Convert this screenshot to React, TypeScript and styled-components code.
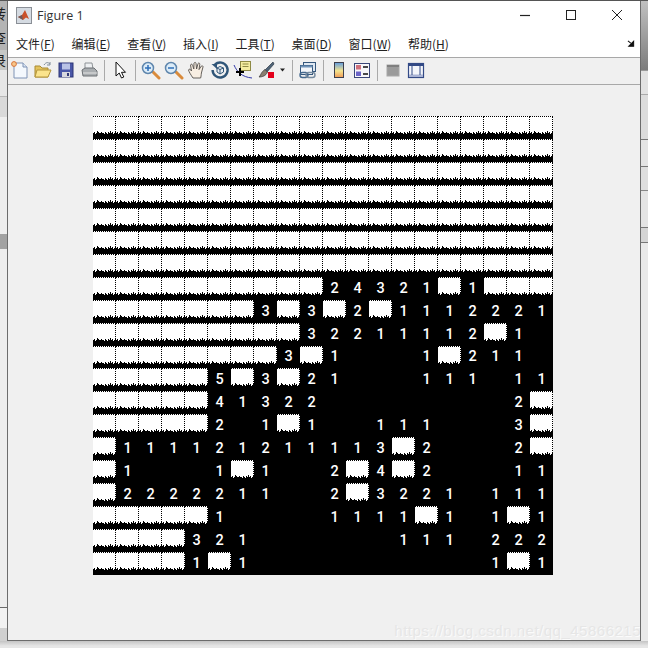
import * as React from "react";
import styled, { createGlobalStyle } from "styled-components";

const GlobalStyle = createGlobalStyle`
  html, body {
    margin: 0;
    padding: 0;
    background: #e9e9e9;
  }
`;

const Desktop = styled.div`
  display: grid;
  grid-template-columns: 7px 634px 7px;
  grid-template-rows: 1px 640px 7px;
  width: 648px;
  height: 648px;
  overflow: hidden;
  background: #e9e9e9;
`;

const TopEdge = styled.div`
  grid-column: 1 / 4;
  background: #555;
`;

const SideStrip = styled.div`
  display: flex;
  flex-direction: column;
  overflow: hidden;
`;

const Band = styled.div<{ $h: number; $bg: string; $line?: string; $fill?: boolean }>`
  flex: ${props => (props.$fill ? "1" : "none")};
  height: ${props => props.$h}px;
  background: ${props => props.$bg};
  border-bottom: ${props => (props.$line ? `1px solid ${props.$line}` : "none")};
  font: 14px "Noto Sans CJK SC", sans-serif;
  color: #222;
  line-height: ${props => props.$h}px;
  text-indent: -8px;
  white-space: nowrap;
`;

const BottomStrip = styled.div`
  grid-column: 1 / 4;
  background: linear-gradient(#c4c4c4, #e6e6e6 5px);
`;

const Window = styled.div`
  display: flex;
  flex-direction: column;
  position: relative;
  border: 1px solid #6c6c6c;
  border-top: 0;
  background: #f0f0f0;
  overflow: hidden;
`;

const TitleBar = styled.div`
  display: flex;
  align-items: center;
  height: 28px;
  padding: 0 0 2px 8px;
  background: #fff;
`;

const TitleText = styled.span`
  margin-left: 5px;
  font: 12.5px "Open Sans", sans-serif;
  color: #333;
`;

const Captions = styled.div`
  display: flex;
  margin-left: auto;
`;

const CaptionButton = styled.div`
  display: flex;
  align-items: center;
  justify-content: center;
  width: 46px;
  height: 28px;
`;

const MenuBar = styled.div`
  display: flex;
  align-items: center;
  gap: 16.7px;
  height: 24px;
  padding: 0 0 2px 8px;
  background: #fff;
  border-bottom: 1px solid #a8a8a8;
  font: 12px "Noto Sans CJK SC", sans-serif;
  color: #222;
`;

const MenuItem = styled.span`
  white-space: nowrap;
`;

const DockArrow = styled.svg`
  position: absolute;
  right: 5px;
  top: 39px;
`;

const Toolbar = styled.div`
  display: flex;
  align-items: center;
  height: 24px;
  padding-bottom: 2px;
  background: #f0f0f0;
  border-bottom: 1px solid #a8a8a8;
`;

const ToolButton = styled.div<{ $w?: number }>`
  display: flex;
  align-items: center;
  justify-content: center;
  flex: none;
  width: ${props => props.$w ?? 23}px;
  height: 24px;
`;

const ToolSeparator = styled.div`
  flex: none;
  width: 8px;
  height: 21px;
  background: linear-gradient(#aaa, #aaa) center / 1px 100% no-repeat;
`;

const Content = styled.div`
  flex: 1;
  padding: 31px 0 0 85px;
`;

const Board = styled.div`
  display: grid;
  grid-template-columns: repeat(20, 23px);
  grid-template-rows: repeat(20, 1fr);
  width: 460px;
  height: 459px;
  background: #000;
`;

const Tile = styled.div`
  display: flex;
  align-items: center;
  justify-content: center;
  overflow: hidden;
  font: 500 14.5px Roboto, sans-serif;
  color: #fff;
`;

const Plate = styled.div`
  position: relative;
  align-self: flex-start;
  box-sizing: border-box;
  width: 23px;
  height: 18px;
  background: #fff;
  border-top: 1px dotted #000;
  border-right: 1px dotted #000;

  &::after {
    content: "";
    position: absolute;
    left: 0;
    right: -1px;
    bottom: 0;
    height: 3px;
    background:
      repeating-linear-gradient(90deg, transparent 0 4px, #000 4px 5px, transparent 5px 13px) bottom / 100% 3px no-repeat,
      repeating-linear-gradient(90deg, transparent 0 1px, #000 1px 2px, transparent 2px 5px, #000 5px 6px, transparent 6px 7px) bottom / 100% 2px no-repeat,
      repeating-linear-gradient(90deg, #000 0 2px, transparent 2px 3px) bottom / 100% 1px no-repeat;
  }
`;

const Watermark = styled.div`
  position: absolute;
  right: -1px;
  bottom: 1px;
  font: 15px "Liberation Sans", sans-serif;
  letter-spacing: 0.5px;
  color: #e6e6e6;
  text-shadow: 1px 1px 0 #fbfbfb;
  white-space: nowrap;
`;

const BOARD = [
  "####################",
  "####################",
  "####################",
  "####################",
  "####################",
  "####################",
  "####################",
  "##########24321#1###",
  "#######3#3#2#1112221",
  "#########32211112#1.",
  "########3#1...1#211.",
  "#####5#3#21...111.11",
  "#####41322........2#",
  "#####2.1#1..111...3#",
  "#111121211113#2...2#",
  "#1...1#1..2#4#2...11",
  "#2222211..2#3221.111",
  "#####1....1111#1.1#1",
  "####321......111.222",
  "####1#1..........1#1",
];

const MENUS: [string, string][] = [
  ["文件", "F"],
  ["编辑", "E"],
  ["查看", "V"],
  ["插入", "I"],
  ["工具", "T"],
  ["桌面", "D"],
  ["窗口", "W"],
  ["帮助", "H"],
];

const MatlabIcon = () => (
  <svg width="16" height="17" viewBox="0 0 16 17">
    <rect x="0.5" y="0.5" width="15" height="16" fill="#d5dbe2" stroke="#8a8f96" />
    <path d="M2 10 L6 8 L9 3 L13 12 L10 10.5 L7 13 Z" fill="#c9512a" />
    <path d="M2 10 L6 8 L7 13 Z" fill="#6d5a5c" />
  </svg>
);

const MinimizeIcon = () => (
  <svg width="12" height="12" viewBox="0 0 12 12">
    <path d="M1 6.5 H11" stroke="#222" strokeWidth="1.2" />
  </svg>
);

const MaximizeIcon = () => (
  <svg width="12" height="12" viewBox="0 0 12 12">
    <rect x="1.5" y="1.5" width="9" height="9" fill="none" stroke="#222" />
  </svg>
);

const CloseIcon = () => (
  <svg width="12" height="12" viewBox="0 0 12 12">
    <path d="M1 1 L11 11 M11 1 L1 11" stroke="#222" />
  </svg>
);

const NewIcon = () => (
  <svg width="20" height="20" viewBox="0 0 20 20">
    <path d="M4 3 H13 L17 7 V18 H4 Z" fill="#f4f8fd" stroke="#7e93b5" />
    <path d="M13 3 V7 H17" fill="#dce6f3" stroke="#7e93b5" />
    <circle cx="4" cy="4" r="2.4" fill="#f7c78a" stroke="#d9743a" />
  </svg>
);

const OpenIcon = () => (
  <svg width="20" height="20" viewBox="0 0 20 20">
    <path d="M2 6 H7 L9 8 H15 V17 H2 Z" fill="#e3c25c" stroke="#a98a33" />
    <path d="M2 17 L4 10 H18 L15 17 Z" fill="#fbe48d" stroke="#b5963c" />
    <path d="M11 5 C13 2 15 2 17 4 M17 2 V5 H14" fill="none" stroke="#7f8c99" />
  </svg>
);

const SaveIcon = () => (
  <svg width="20" height="20" viewBox="0 0 20 20">
    <rect x="3" y="3" width="14" height="14" fill="#4a57a8" stroke="#2c3474" />
    <rect x="6" y="3.5" width="8" height="6" fill="#b9c2e6" />
    <rect x="6" y="12" width="8" height="5" fill="#d8d8de" />
    <rect x="11" y="13" width="2" height="3" fill="#333a77" />
  </svg>
);

const PrintIcon = () => (
  <svg width="20" height="20" viewBox="0 0 20 20">
    <path d="M6 3 H13 L14 9 H6 Z" fill="#eef0f2" stroke="#8d9296" />
    <path d="M3 10 L6 8 H15 L18 11 V16 H4 Z" fill="#a9adb0" stroke="#6c7074" />
    <path d="M4 13 H18" stroke="#e4e4e4" />
  </svg>
);

const PointerIcon = () => (
  <svg width="20" height="20" viewBox="0 0 20 20">
    <path d="M6 2 V16 L9.2 13 L11.5 18 L13.8 17 L11.5 12.3 H15.5 Z" fill="#fff" stroke="#111" />
  </svg>
);

const LensIcon = ({ plus }: { plus?: boolean }) => (
  <svg width="20" height="20" viewBox="0 0 20 20">
    <path d="M12 12 L18 18" stroke="#d98b3c" strokeWidth="3" strokeLinecap="round" />
    <circle cx="7" cy="8" r="5.5" fill="#dcecf8" stroke="#5f86ad" strokeWidth="1.5" />
    <path d={plus ? "M4 8 H10 M7 5 V11" : "M4 8 H10"} stroke="#2f6fb8" strokeWidth="1.5" />
  </svg>
);

const HandIcon = () => (
  <svg width="20" height="20" viewBox="0 0 20 20">
    <path
      d="M6 18 C4 15 2 12 1.5 10 C2 8.5 3.5 9 4.5 11 L3.5 5 C4 3.8 5.2 4 5.6 5.2 L6.8 9 L7 3.2 C7.6 2 8.8 2.2 9 3.4 L9.6 9 L11 3.6 C11.6 2.6 12.8 3 12.8 4.2 L12 9.6 L14.4 6 C15.2 5.4 16.2 6 16 7 L14.4 13 C14.2 15 14 17 13.6 18 Z"
      fill="#f8eee2"
      stroke="#55504c"
      strokeWidth="0.9"
    />
  </svg>
);

const RotateIcon = () => (
  <svg width="20" height="20" viewBox="0 0 20 20">
    <path d="M5 4.5 A7.5 7.5 0 1 1 2.6 10" fill="none" stroke="#2f5578" strokeWidth="2.4" />
    <path d="M1.5 4 H7 V9 Z" fill="#2f5578" />
    <path d="M7 8 L10 6.5 L13.5 8 V12 L10 14 L7 12 Z" fill="#e9eef3" stroke="#2f5578" />
    <path d="M7 8 L10 9.5 L13.5 8 M10 9.5 V14" fill="none" stroke="#2f5578" />
  </svg>
);

const DataCursorIcon = () => (
  <svg width="20" height="20" viewBox="0 0 20 20">
    <path d="M1 5 C4 12 9 17 19 18" fill="none" stroke="#3138a8" />
    <rect x="7.5" y="1.5" width="10" height="9" fill="#f4eda0" stroke="#8e8a45" />
    <path d="M9.5 4 H15.5 M9.5 6.5 H15.5" stroke="#8e8a45" />
    <path d="M7 8 V16 M3 12 H11" stroke="#000" strokeWidth="2" />
  </svg>
);

const BrushIcon = () => (
  <svg width="20" height="20" viewBox="0 0 20 20">
    <path d="M17 2 L9 10 L11 12 L18 4 Z" fill="#4f6478" stroke="#2c3845" strokeWidth="0.7" />
    <path d="M9 9.5 L11.5 12 C10 16 6 17 3 17 C5 15 5 12 9 9.5 Z" fill="#8a7f70" stroke="#333" strokeWidth="0.7" />
    <rect x="12" y="12" width="6" height="6" fill="#e3001b" />
  </svg>
);

const CaretIcon = () => (
  <svg width="5" height="4" viewBox="0 0 5 4">
    <path d="M0 0.5 H5 L2.5 3.5 Z" fill="#222" />
  </svg>
);

const LinkIcon = () => (
  <svg width="20" height="20" viewBox="0 0 20 20">
    <rect x="5.5" y="2.5" width="12" height="9" fill="#dfe8f2" stroke="#35577c" />
    <rect x="2.5" y="5.5" width="12" height="9" fill="#f3f6fa" stroke="#35577c" />
    <path d="M2.5 5.5 H14.5 V7.5 H2.5 Z" fill="#6f93b8" />
    <rect x="2" y="12.5" width="8" height="5" rx="2.5" fill="none" stroke="#44688e" strokeWidth="1.4" />
    <rect x="8" y="12.5" width="9" height="5" rx="2.5" fill="none" stroke="#768ba0" strokeWidth="1.4" />
  </svg>
);

const ColorbarIcon = () => (
  <svg width="20" height="20" viewBox="0 0 20 20">
    <defs>
      <linearGradient id="colorbarFill" x1="0" y1="0" x2="0" y2="1">
        <stop offset="0" stopColor="#5f9be0" />
        <stop offset="0.55" stopColor="#f5e58f" />
        <stop offset="1" stopColor="#ef9a55" />
      </linearGradient>
    </defs>
    <rect x="5.5" y="2.5" width="9" height="15" fill="url(#colorbarFill)" stroke="#3d3f4d" />
  </svg>
);

const LegendIcon = () => (
  <svg width="20" height="20" viewBox="0 0 20 20">
    <rect x="2.5" y="3.5" width="15" height="14" fill="#f7f7fa" stroke="#3a4678" />
    <rect x="4" y="5" width="5" height="4.5" fill="#d0707c" />
    <rect x="4" y="11.5" width="5" height="4.5" fill="#6c64c8" />
    <path d="M11 7 H16 M11 14 H16" stroke="#111" strokeWidth="1.4" />
  </svg>
);

const PlotToolsHideIcon = () => (
  <svg width="20" height="20" viewBox="0 0 20 20">
    <rect x="4" y="5" width="12" height="11" fill="#9b9b9b" stroke="#a8a8a8" />
    <rect x="4" y="5" width="12" height="2" fill="#7f7f7f" />
  </svg>
);

const PlotToolsIcon = () => (
  <svg width="20" height="20" viewBox="0 0 20 20">
    <rect x="2.5" y="3.5" width="15" height="14" fill="#f4f6fb" stroke="#334a86" strokeWidth="1.2" />
    <rect x="3" y="4" width="14" height="2" fill="#334a86" />
    <rect x="3" y="14.5" width="14" height="2.5" fill="#a9b3d4" />
    <path d="M6 6 V15 M14 6 V15" stroke="#334a86" />
  </svg>
);

const DockIcon = () => (
  <DockArrow width="8" height="7" viewBox="0 0 9 8">
    <path d="M1 1 L6 5 M7.5 1.5 V7 H2 Z" stroke="#111" strokeWidth="1.2" fill="#111" />
  </DockArrow>
);

const LEFT_BANDS = [
  { h: 24, bg: "#b4b4b4", text: "转" },
  { h: 25, bg: "#b4b4b4", text: "查" },
  { h: 20, bg: "#c6c8c6", text: "录" },
  { h: 26, bg: "#e6e6e6", line: "#b8b8b8" },
  { h: 20, bg: "#d9d9d9" },
  { h: 117, bg: "#eeeeee" },
  { h: 15, bg: "#a2a2a2" },
  { h: 358, bg: "#ededed", line: "#6a6a6a" },
  { h: 20, bg: "#f2f2f2" },
  { h: 0, bg: "#d0d0d0", fill: true },
];

const RIGHT_BANDS = [
  { h: 69, bg: "linear-gradient(#c0c0c0, #7c7c7c)", line: "#999" },
  { h: 23, bg: "#e2e2e2", line: "#aaa" },
  { h: 44, bg: "#dcdcdc", line: "#777" },
  { h: 26, bg: "#e4e4e4", line: "#777" },
  { h: 23, bg: "#dedede", line: "#888" },
  { h: 36, bg: "#e4e4e4", line: "#777" },
  { h: 14, bg: "#d4d4d4", line: "#777" },
  { h: 0, bg: "#e9e9e9", fill: true },
];

const App: React.FC = () => {
  return (
    <Desktop>
      <GlobalStyle />
      <TopEdge />
      <SideStrip>
        {LEFT_BANDS.map((band, i) => (
          <Band key={i} $h={band.h} $bg={band.bg} $line={band.line} $fill={band.fill}>
            {band.text}
          </Band>
        ))}
      </SideStrip>
      <Window>
        <TitleBar>
          <MatlabIcon />
          <TitleText>Figure 1</TitleText>
          <Captions>
            <CaptionButton>
              <MinimizeIcon />
            </CaptionButton>
            <CaptionButton>
              <MaximizeIcon />
            </CaptionButton>
            <CaptionButton>
              <CloseIcon />
            </CaptionButton>
          </Captions>
        </TitleBar>
        <MenuBar>
          {MENUS.map(([label, key]) => (
            <MenuItem key={key}>
              {label}(<u>{key}</u>)
            </MenuItem>
          ))}
          <DockIcon />
        </MenuBar>
        <Toolbar>
          <ToolButton><NewIcon /></ToolButton>
          <ToolButton><OpenIcon /></ToolButton>
          <ToolButton><SaveIcon /></ToolButton>
          <ToolButton><PrintIcon /></ToolButton>
          <ToolSeparator />
          <ToolButton><PointerIcon /></ToolButton>
          <ToolSeparator />
          <ToolButton><LensIcon plus /></ToolButton>
          <ToolButton><LensIcon /></ToolButton>
          <ToolButton><HandIcon /></ToolButton>
          <ToolButton><RotateIcon /></ToolButton>
          <ToolButton><DataCursorIcon /></ToolButton>
          <ToolButton><BrushIcon /></ToolButton>
          <ToolButton $w={11}><CaretIcon /></ToolButton>
          <ToolSeparator />
          <ToolButton><LinkIcon /></ToolButton>
          <ToolSeparator />
          <ToolButton><ColorbarIcon /></ToolButton>
          <ToolButton><LegendIcon /></ToolButton>
          <ToolSeparator />
          <ToolButton><PlotToolsHideIcon /></ToolButton>
          <ToolButton><PlotToolsIcon /></ToolButton>
        </Toolbar>
        <Content>
          <Board>
            {BOARD.map((row, r) =>
              row.split("").map((cell, c) => (
                <Tile key={`${r}-${c}`}>
                  {cell === "#" ? <Plate /> : cell === "." ? null : cell}
                </Tile>
              ))
            )}
          </Board>
        </Content>
        <Watermark>https://blog.csdn.net/qq_45866215</Watermark>
      </Window>
      <SideStrip>
        {RIGHT_BANDS.map((band, i) => (
          <Band key={i} $h={band.h} $bg={band.bg} $line={band.line} $fill={band.fill} />
        ))}
      </SideStrip>
      <BottomStrip />
    </Desktop>
  );
};

export default App;
